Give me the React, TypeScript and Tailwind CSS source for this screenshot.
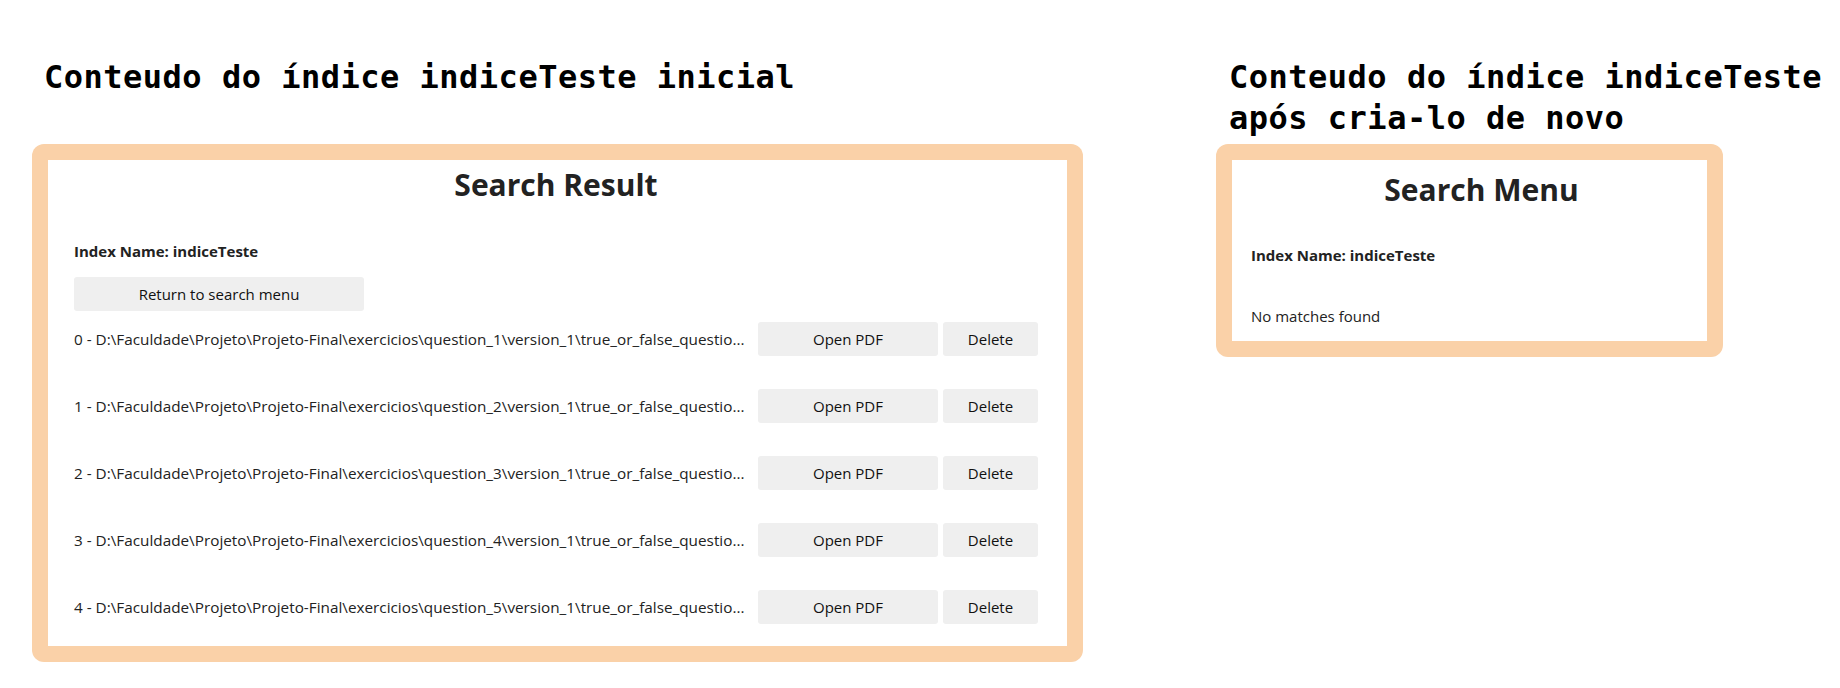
const files = [1, 2, 3, 4, 5];

function ResultRow({ n }: { n: number }) {
  const path = `${n - 1} - D:\\Faculdade\\Projeto\\Projeto-Final\\exercicios\\question_${n}\\version_1\\true_or_false_questio...`;
  return (
    <div className="flex items-center h-[34px]">
      <div className="flex-1 min-w-0 whitespace-nowrap text-[15.3px] leading-[20px]">{path}</div>
      <button className="ml-[10px] w-[180px] h-[34px] bg-[#efefef] rounded-[3px] text-[15px] text-[#111]">Open PDF</button>
      <button className="ml-[5px] w-[95px] h-[34px] bg-[#efefef] rounded-[3px] text-[15px] text-[#111]">Delete</button>
    </div>
  );
}

export default function App() {
  return (
    <div className="w-[1840px] h-[688px] bg-white flex items-start pl-[32px] pt-[57px] text-[#222] font-['Open_Sans','Noto_Sans',sans-serif]">
      {/* Left: initial index contents */}
      <div className="w-[1051px] flex flex-col shrink-0">
        <h1 className="pl-[12px] text-[32px] leading-[41px] tracking-[0.5px] font-bold text-black whitespace-nowrap font-['DejaVu_Sans_Mono','Liberation_Mono',monospace]">
          Conteudo do índice indiceTeste inicial
        </h1>
        <div className="mt-[46px] bg-[#fad1a8] rounded-[12px] p-4">
          <div className="bg-white pt-[5px] pl-[26px] pr-[29px] pb-[22px]">
            <h2 className="text-center text-[30px] leading-[40px] font-bold">Search Result</h2>
            <p className="mt-[36px] text-[15px] leading-[20px] font-bold">Index Name: indiceTeste</p>
            <button className="mt-[16px] w-[290px] h-[34px] bg-[#efefef] rounded-[3px] text-[15px] text-[#111]">
              Return to search menu
            </button>
            <div className="mt-[11px] flex flex-col gap-[33px]">
              {files.map(n => <ResultRow key={n} n={n} />)}
            </div>
          </div>
        </div>
      </div>

      {/* Right: after recreating the index */}
      <div className="ml-[133px] w-[507px] flex flex-col shrink-0">
        <h1 className="pl-[13px] text-[32px] leading-[41px] tracking-[0.5px] font-bold text-black whitespace-nowrap font-['DejaVu_Sans_Mono','Liberation_Mono',monospace]">
          Conteudo do índice indiceTeste
          <br />
          após cria-lo de novo
        </h1>
        <div className="mt-[5px] bg-[#fad1a8] rounded-[12px] p-4">
          <div className="bg-white pt-[10px] pl-[19px] pr-[19px] pb-[15px]">
            <h2 className="text-center pl-[24px] text-[30px] leading-[40px] font-bold">Search Menu</h2>
            <p className="mt-[35px] text-[15px] leading-[20px] font-bold">Index Name: indiceTeste</p>
            <p className="mt-[41px] text-[15px] leading-[20px]">No matches found</p>
          </div>
        </div>
      </div>
    </div>
  );
}
